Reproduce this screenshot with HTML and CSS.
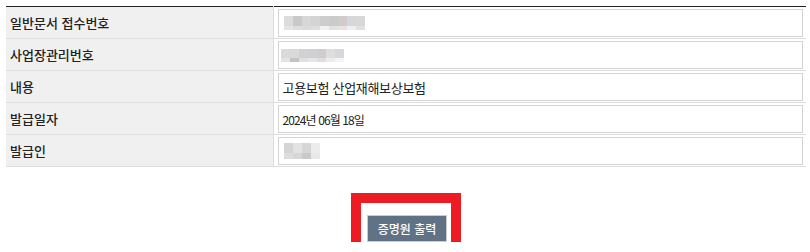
FILE: index.html
```html
<!DOCTYPE html>
<html lang="ko">
<head>
    <meta charset="UTF-8">
    <meta name="viewport" content="width=device-width, initial-scale=1.0">
    <title>증명원 출력</title>
    <link rel="stylesheet" href="styles.css">
</head>
<body>
    <div class="wrap">
        <table class="info">
            <colgroup>
                <col class="col-label">
                <col>
            </colgroup>
            <tr>
                <th>일반문서 접수번호</th>
                <td><div class="field"><div class="blur blur-1"><i></i><i></i></div></div></td>
            </tr>
            <tr>
                <th>사업장관리번호</th>
                <td><div class="field"><div class="blur blur-2"><i></i><i></i></div></div></td>
            </tr>
            <tr>
                <th>내용</th>
                <td><div class="field">고용보험 산업재해보상보험</div></td>
            </tr>
            <tr>
                <th>발급일자</th>
                <td><div class="field field-date">2024년 06월 18일</div></td>
            </tr>
            <tr>
                <th>발급인</th>
                <td><div class="field"><div class="blur blur-3"><i></i><i></i></div></div></td>
            </tr>
        </table>

        <div class="actions">
            <span class="btn-box">
                <button class="btn">증명원 출력</button>
                <span class="mark"></span>
            </span>
        </div>
    </div>
</body>
</html>
```

FILE: styles.css
```css
body { margin: 0; font-family: "Noto Sans CJK KR", "Noto Sans", sans-serif; font-size: 13px; color: #222; overflow: hidden; }
.wrap { padding: 6px 4px 0 6px; }

.info { width: 800px; border-collapse: collapse; table-layout: fixed; border-top: 1px solid #222; }
.col-label { width: 267px; }
.info th { background: #f0f0f0; border-bottom: 1px solid #ddd; border-right: 1px solid #ddd; text-align: left; font-weight: 500; padding: 0 0 0 4px; }
.info td { border-bottom: 1px solid #ddd; padding: 2px 3px 1px 4px; }

.field { box-sizing: border-box; height: 28px; border: 1px solid #d4d4d4; padding: 0 4px; display: flex; align-items: center; letter-spacing: -0.3px; }
.field-date { font-size: 12px; letter-spacing: -0.9px; }

.blur { display: grid; grid-template-rows: 10px 4px; }
.blur i { display: block; }
.blur-1 { width: 81px; margin-left: 1px; }
.blur-1 i:first-child { background: linear-gradient(90deg, #dcdcdc 0 9px, #c9c9c9 9px 18px, #d7d7d7 18px 27px, #d4d4d4 27px 36px, #cdcdcd 36px 45px, #cbcbcb 45px 54px, #d0ccca 54px 63px, #d5d7da 63px 72px, #d8d8d8 72px); }
.blur-1 i:last-child { background: linear-gradient(90deg, #e4e4e4 0 9px, #dedede 9px 18px, #dadadf 18px 27px, #dedede 27px 36px, #f2f2f2 36px 45px, #e0e3e6 45px 54px, #e5e3e3 54px 63px, #efefef 63px 72px, #e0e0e0 72px); }
.blur-2 { width: 63px; margin-left: -2px; grid-template-rows: 9px 4px; }
.blur-2 i:first-child { background: linear-gradient(90deg, #dadada 0 9px, #d9d9d9 9px 18px, #d1d1d1 18px 27px, #cfd0d4 27px 36px, #d3cccc 36px 45px, #dedede 45px 54px, #d8d8dc 54px); }
.blur-2 i:last-child { background: linear-gradient(90deg, #e3e3e3 0 9px, #c3c3c3 9px 18px, #e0e0e0 18px 27px, #e6e6e8 27px 36px, #dedede 36px 45px, #ececec 45px 54px, #f4f4f4 54px); }
.blur-3 { width: 36px; margin-left: 1px; grid-template-rows: 10px 6px; }
.blur-3 i:first-child { background: linear-gradient(90deg, #d4d4d4 0 9px, #e2e2e2 9px 18px, #d6d6d6 18px 27px, #ececec 27px); }
.blur-3 i:last-child { background: linear-gradient(90deg, #dddddd 0 9px, #d8d6d3 9px 18px, #c9c9c9 18px 27px, #e6e8ea 27px); }

.actions { text-align: center; margin-top: 48px; padding-left: 2px; }
.btn-box { position: relative; display: inline-block; }
.btn { display: block; width: 80px; height: 27px; background: #617286; border: 1px solid #ccc; color: #fff; font-family: inherit; font-size: 12px; font-weight: 500; padding: 0; cursor: pointer; }
.mark { position: absolute; left: -16px; top: -22px; width: 110px; height: 67px; box-sizing: border-box; border: 10px solid #ed1c24; pointer-events: none; }
```
